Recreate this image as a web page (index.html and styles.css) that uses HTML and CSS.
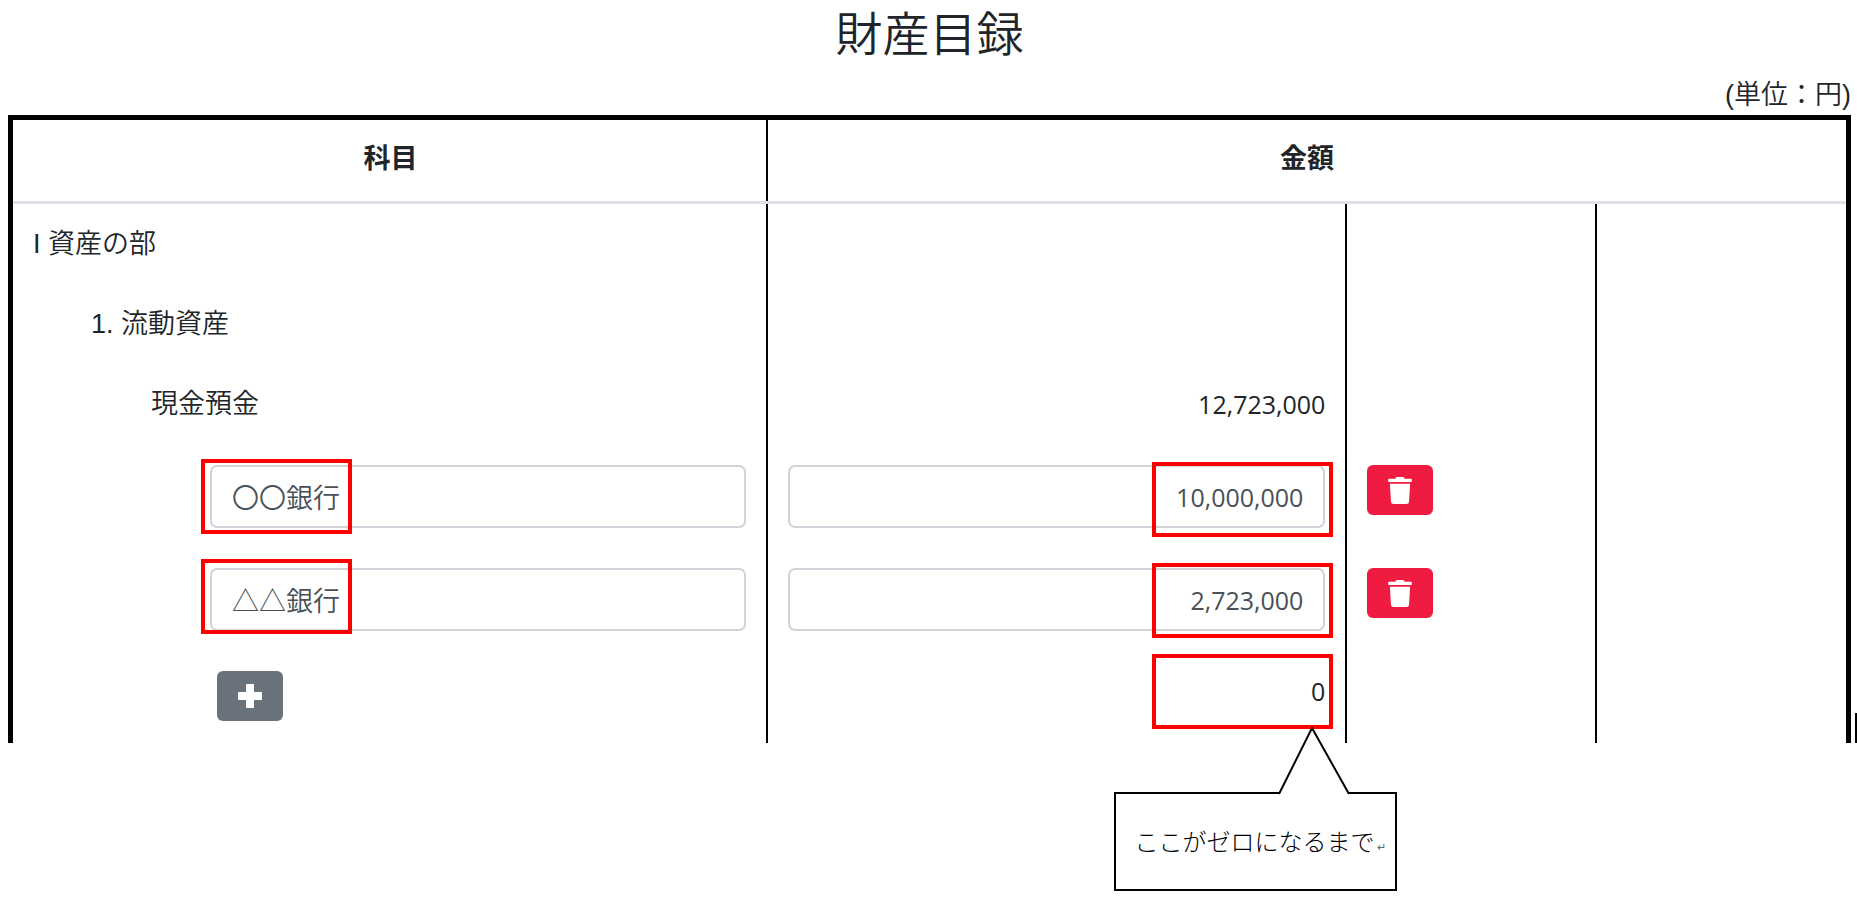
FILE: index.html
```html
<!DOCTYPE html>
<html lang="ja">

<head>
    <meta charset="UTF-8">
    <meta name="viewport" content="width=device-width, initial-scale=1.0">
    <title>財産目録</title>
    <link rel="stylesheet" href="styles.css">
</head>

<body>
    <div class="container">
        <h1>財産目録</h1>
        <p class="unit">(単位：円)</p>
        <div class="sheet">
            <table class="ledger">
                <colgroup>
                    <col class="col-item">
                    <col class="col-amount">
                    <col class="col-sub">
                    <col class="col-sub">
                </colgroup>
                <thead>
                    <tr>
                        <th>科目</th>
                        <th colspan="3">金額</th>
                    </tr>
                </thead>
                <tbody>
                    <tr>
                        <td>I 資産の部</td>
                        <td></td>
                        <td></td>
                        <td></td>
                    </tr>
                    <tr>
                        <td class="level-1">1. 流動資産</td>
                        <td></td>
                        <td></td>
                        <td></td>
                    </tr>
                    <tr>
                        <td class="level-2">現金預金</td>
                        <td class="amount">12,723,000</td>
                        <td></td>
                        <td></td>
                    </tr>
                    <tr class="entry">
                        <td class="level-3">
                            <div class="field">
                                <input type="text" class="form-control" value="〇〇銀行" aria-label="科目 1">
                                <span class="mark mark-name"></span>
                            </div>
                        </td>
                        <td>
                            <div class="field">
                                <input type="text" class="form-control number" value="10,000,000" aria-label="金額 1">
                                <span class="mark mark-amount"></span>
                            </div>
                        </td>
                        <td>
                            <button type="button" class="btn btn-danger" aria-label="削除">
                                <svg class="icon-trash" viewBox="0 0 448 512"><path d="M432 32H312l-9.4-18.7A24 24 0 0 0 281.1 0H166.8a23.72 23.72 0 0 0-21.4 13.3L136 32H16A16 16 0 0 0 0 48v32a16 16 0 0 0 16 16h416a16 16 0 0 0 16-16V48a16 16 0 0 0-16-16zM53.2 467a48 48 0 0 0 47.9 45h245.8a48 48 0 0 0 47.9-45L416 128H32z"/></svg>
                            </button>
                        </td>
                        <td></td>
                    </tr>
                    <tr class="entry second">
                        <td class="level-3">
                            <div class="field">
                                <input type="text" class="form-control" value="△△銀行" aria-label="科目 2">
                                <span class="mark mark-name"></span>
                            </div>
                        </td>
                        <td>
                            <div class="field">
                                <input type="text" class="form-control number" value="2,723,000" aria-label="金額 2">
                                <span class="mark mark-amount"></span>
                            </div>
                        </td>
                        <td>
                            <button type="button" class="btn btn-danger" aria-label="削除">
                                <svg class="icon-trash" viewBox="0 0 448 512"><path d="M432 32H312l-9.4-18.7A24 24 0 0 0 281.1 0H166.8a23.72 23.72 0 0 0-21.4 13.3L136 32H16A16 16 0 0 0 0 48v32a16 16 0 0 0 16 16h416a16 16 0 0 0 16-16V48a16 16 0 0 0-16-16zM53.2 467a48 48 0 0 0 47.9 45h245.8a48 48 0 0 0 47.9-45L416 128H32z"/></svg>
                            </button>
                        </td>
                        <td></td>
                    </tr>
                    <tr class="entry last">
                        <td class="level-3">
                            <button type="button" class="btn btn-add" aria-label="追加">
                                <svg class="icon-plus" viewBox="0 0 24 24"><path d="M9 0h6a1 1 0 0 1 1 1v7h7a1 1 0 0 1 1 1v6a1 1 0 0 1-1 1h-7v7a1 1 0 0 1-1 1H9a1 1 0 0 1-1-1v-7H1a1 1 0 0 1-1-1V9a1 1 0 0 1 1-1h7V1a1 1 0 0 1 1-1z"/></svg>
                            </button>
                        </td>
                        <td class="amount">
                            <div class="field">
                                0
                                <span class="mark mark-total"></span>
                                <div class="callout">
                                    <svg class="callout-tail" viewBox="0 0 72 68"><path d="M1 67L34 1L71 67" /></svg>
                                    <p>ここがゼロになるまで<span class="return">↵</span></p>
                                </div>
                            </div>
                        </td>
                        <td></td>
                        <td></td>
                    </tr>
                </tbody>
            </table>
        </div>
    </div>
</body>

</html>
```

FILE: styles.css
```css
* {
    box-sizing: border-box;
    margin: 0;
    padding: 0;
}

body {
    min-height: 100vh;
    font-family: "Liberation Sans", "Noto Sans CJK JP", sans-serif;
    font-size: 27px;
    font-weight: 350;
    line-height: 40px;
    color: #212529;
    background-color: white;
}

.container {
    padding: 7px 6px 0 8px;
}

h1 {
    font-size: 47px;
    font-weight: 350;
    line-height: 56px;
    text-align: center;
    margin-bottom: 12px;
}

.unit {
    text-align: right;
}

.sheet {
    position: relative;
}

/* edge of the next sheet */
.sheet::after {
    content: "";
    position: absolute;
    right: -6px;
    bottom: 0;
    width: 2px;
    height: 30px;
    background-color: black;
}

.ledger {
    width: 100%;
    table-layout: fixed;
    border-collapse: separate;
    border-spacing: 0;
    border: 5px solid black;
    border-bottom: none;
}

.col-item {
    width: 41.2%;
}

.col-amount {
    width: 31.6%;
}

.col-sub {
    width: 13.6%;
}

.ledger th {
    height: 84px;
    padding-bottom: 3px;
    border-bottom: 3px solid #dee2e6;
    position: relative;
}

/* the rule between the headings stops above the grey line */
.ledger th:first-child::after {
    content: "";
    position: absolute;
    top: 0;
    right: 0;
    bottom: 0;
    width: 2px;
    background-color: black;
}

.ledger td {
    padding: 20px;
    vertical-align: top;
    border-right: 2px solid black;
}

.ledger td:last-child {
    border-right: none;
}

.ledger td.level-1 {
    padding-left: 78px;
}

.ledger td.level-2 {
    padding-left: 138px;
}

.ledger td.level-3 {
    padding-left: 197px;
}

.ledger .entry td {
    padding-top: 21px;
    padding-bottom: 19px;
}

.ledger .last td {
    padding-bottom: 22px;
}

.amount {
    font-family: "Open Sans", sans-serif;
    font-size: 25px;
    font-weight: 400;
    text-align: right;
}

.field {
    position: relative;
}

.form-control {
    display: block;
    width: 100%;
    height: 63px;
    padding: 0 20px;
    font-family: inherit;
    font-size: 27px;
    font-weight: inherit;
    color: #495057;
    background-color: white;
    border: 2px solid #ced4da;
    border-radius: 7px;
}

.form-control.number {
    font-family: "Open Sans", sans-serif;
    font-size: 25px;
    font-weight: 400;
    text-align: right;
}

.btn {
    display: flex;
    align-items: center;
    justify-content: center;
    width: 66px;
    height: 50px;
    border: none;
    border-radius: 6px;
    cursor: pointer;
}

.btn svg {
    fill: white;
}

.btn-danger {
    background-color: #f01b40;
}

.btn-add {
    margin-left: 7px;
    background-color: #6a737b;
}

.icon-trash {
    width: 24px;
    height: 27px;
}

.icon-plus {
    width: 24px;
    height: 24px;
}

/* red frames */
.mark {
    position: absolute;
    height: 75px;
    border: 4px solid red;
    pointer-events: none;
}

.mark-name {
    top: -6px;
    left: -9px;
    width: 151px;
}

.mark-amount {
    top: -3px;
    right: -8px;
    width: 181px;
}

.second .mark-name {
    top: -9px;
}

.second .mark-amount {
    top: -5px;
}

.mark-total {
    top: -17px;
    right: -8px;
    width: 181px;
}

.callout {
    position: absolute;
    top: 121px;
    right: -72px;
    width: 283px;
    height: 99px;
    padding: 29px 0 0 18px;
    background-color: white;
    border: 2px solid black;
    text-align: left;
}

.callout p {
    font-family: "Liberation Serif", "Noto Sans CJK JP", serif;
    font-size: 24px;
    font-weight: 300;
    color: black;
    white-space: nowrap;
}

.callout-tail {
    position: absolute;
    top: -67px;
    left: 162px;
    width: 72px;
    height: 68px;
    fill: white;
    stroke: black;
    stroke-width: 2px;
}

.return {
    margin-left: 3px;
    font-size: 11px;
    color: #666;
}
```
